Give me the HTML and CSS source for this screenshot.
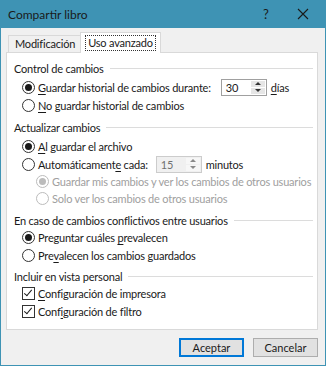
FILE: index.html
```html
<!DOCTYPE html>
<html lang="es">
<head>
  <meta charset="UTF-8" />
  <title>Compartir libro</title>
  <link rel="stylesheet" href="styles.css">
</head>
<body>
  <div class="window">
    <div class="titlebar">
      <span class="title">Compartir libro</span>
      <span class="help">?</span>
      <span class="close">
        <svg width="12" height="12" viewBox="0 0 12 12"><path d="M1 1 L11 11 M11 1 L1 11" stroke="#1a1a1a" stroke-width="1.1" fill="none"/></svg>
      </span>
    </div>

    <div class="dialog">
      <div class="tabs">
        <div class="tab">Modificación</div>
        <div class="tab active"><span class="focus">Uso avanzado</span></div>
      </div>

      <div class="panel">
        <div class="group">
          <div class="group-title">Control de cambios</div>
          <div class="opt">
            <span class="radio on"></span>
            <span><u>G</u>uardar historial de cambios durante:</span>
            <span class="spin spin-days">
              <span class="spin-value">30</span>
              <span class="spin-btns"><span class="up"></span><span class="down"></span></span>
            </span>
            <span><u>d</u>ías</span>
          </div>
          <div class="opt">
            <span class="radio"></span>
            <span><u>N</u>o guardar historial de cambios</span>
          </div>
        </div>

        <div class="group">
          <div class="group-title">Actualizar cambios</div>
          <div class="opt">
            <span class="radio on"></span>
            <span><u>A</u>l guardar el archivo</span>
          </div>
          <div class="opt">
            <span class="radio"></span>
            <span>Automáticament<u>e</u> cada:</span>
            <span class="spin spin-mins disabled">
              <span class="spin-value">15</span>
              <span class="spin-btns"><span class="up"></span><span class="down"></span></span>
            </span>
            <span>minutos</span>
          </div>
          <div class="opt sub disabled">
            <span class="radio on"></span>
            <span>Guardar mis cambios y ver los cambios de otros usuarios</span>
          </div>
          <div class="opt sub disabled">
            <span class="radio"></span>
            <span>Solo ver los cambios de otros usuarios</span>
          </div>
        </div>

        <div class="group group-conflict">
          <div class="group-title">En caso de cambios conflictivos entre usuarios</div>
          <div class="opt">
            <span class="radio on"></span>
            <span>Preguntar cuáles <u>p</u>revalecen</span>
          </div>
          <div class="opt">
            <span class="radio"></span>
            <span>Pre<u>v</u>alecen los cambios guardados</span>
          </div>
        </div>

        <div class="group group-view">
          <div class="group-title">Incluir en vista personal</div>
          <div class="opt">
            <span class="check"></span>
            <span><u>C</u>onfiguración de impresora</span>
          </div>
          <div class="opt">
            <span class="check"></span>
            <span>Conf<u>i</u>guración de filtro</span>
          </div>
        </div>
      </div>

      <div class="buttons">
        <button class="btn default">Aceptar</button>
        <button class="btn">Cancelar</button>
      </div>
    </div>
  </div>
</body>
</html>
```

FILE: styles.css
```css
body {
  margin: 0;
  font-family: Lato, "Noto Sans", sans-serif;
  font-size: 11px;
  letter-spacing: -0.2px;
  color: #000;
  background: #fff;
}

.window {
  width: 326px;
  height: 366px;
  box-sizing: border-box;
  border: 1px solid #3e93b4;
  border-top: none;
  background: #f0f0f0;
  display: flex;
  flex-direction: column;
}

.titlebar {
  height: 28px;
  margin: 0 -1px;
  background: #3e93b4;
  display: flex;
  align-items: center;
  color: #1a1a1a;
  font-size: 12px;
  letter-spacing: 0;
}
.title {
  margin-left: 8px;
  flex: 1;
}
.help {
  width: 20px;
  text-align: center;
  font-size: 13px;
  margin-right: 21px;
}
.close {
  width: 12px;
  height: 12px;
  margin-right: 17px;
  display: flex;
}

.dialog {
  flex: 1;
  display: flex;
  flex-direction: column;
  padding: 5px 7px 0 5px;
}

/* tabs */
.tabs {
  display: flex;
  align-items: flex-end;
  padding-left: 2px;
  height: 19px;
  position: relative;
  z-index: 1;
}
.tab {
  height: 16px;
  padding: 0 6px;
  border: 1px solid #d9d9d9;
  border-bottom: none;
  background: #f0f0f0;
  line-height: 16px;
  color: #1a1a1a;
}
.tab.active {
  height: 20px;
  margin-left: -2px;
  margin-bottom: -1px;
  padding: 0 5px 0 5px;
  background: #fff;
  display: flex;
  align-items: center;
}
.focus {
  outline: 1px dotted #333;
  padding: 0 2px;
  line-height: 14px;
}

.panel {
  height: 278px;
  box-sizing: border-box;
  background: #fff;
  border: 1px solid #d9d9d9;
  padding: 7px 4px 0 7px;
}

.group + .group {
  margin-top: 5px;
}
.group-title {
  display: flex;
  align-items: center;
  height: 16px;
  color: #1a1a1a;
  margin-bottom: 2px;
  white-space: nowrap;
}
.group-title::after {
  content: "";
  flex: 1;
  border-top: 1px solid #dcdcdc;
  margin-left: 6px;
}
.group-conflict .group-title,
.group-view .group-title {
  margin-bottom: 0;
}
.group.group-view {
  margin-top: 4px;
}

.opt {
  display: flex;
  align-items: center;
  height: 18px;
  padding-left: 8px;
  color: #1a1a1a;
  white-space: nowrap;
}
.opt.sub {
  padding-left: 22px;
  height: 17px;
}
.opt.disabled {
  color: #a0a0a0;
}
.opt u {
  text-decoration-thickness: 1px;
  text-underline-offset: 2px;
}

.radio {
  width: 11px;
  height: 11px;
  border: 1px solid #333;
  border-radius: 50%;
  background: #fff;
  margin-right: 3px;
  display: flex;
  align-items: center;
  justify-content: center;
  flex-shrink: 0;
}
.radio.on::after {
  content: "";
  width: 7px;
  height: 7px;
  border-radius: 50%;
  background: #1a1a1a;
}
.disabled .radio {
  border-color: #bcbcbc;
}
.disabled .radio.on::after {
  background: #bcbcbc;
}

.check {
  width: 11px;
  height: 11px;
  border: 1px solid #333;
  background: #fff;
  margin-right: 3px;
  position: relative;
  flex-shrink: 0;
}
.check::after {
  content: "";
  position: absolute;
  left: 3px;
  top: 0;
  width: 3px;
  height: 7px;
  border: solid #1a1a1a;
  border-width: 0 1px 1px 0;
  transform: rotate(40deg);
}

/* spinners */
.spin {
  width: 46px;
  height: 17px;
  box-sizing: border-box;
  border: 1px solid #a0a0a0;
  background: #fff;
  display: flex;
  margin-right: 4px;
  flex-shrink: 0;
}
.spin-days {
  margin-left: 10px;
}
.spin-mins {
  margin-left: 8px;
}
.spin-value {
  flex: 1;
  padding-left: 4px;
  line-height: 15px;
}
.spin-btns {
  width: 14px;
  display: flex;
  flex-direction: column;
  gap: 1px;
  padding: 1px 1px 1px 0;
}
.spin-btns span {
  flex: 1;
  background: #e6e6e6;
  display: flex;
  align-items: center;
  justify-content: center;
}
.spin-btns .up::after {
  content: "";
  border: 3px solid transparent;
  border-bottom: 3px solid #333;
  border-top: none;
}
.spin-btns .down::after {
  content: "";
  border: 3px solid transparent;
  border-top: 3px solid #333;
  border-bottom: none;
}
.spin.disabled {
  border-color: #cccccc;
  background: #f0f0f0;
  color: #707070;
}
.spin.disabled .spin-btns span {
  background: #f7f7f7;
}
.spin.disabled .spin-btns .up::after {
  border-bottom-color: #8a8a8a;
}
.spin.disabled .spin-btns .down::after {
  border-top-color: #8a8a8a;
}

/* buttons */
.buttons {
  display: flex;
  justify-content: flex-end;
  gap: 9px;
  margin-top: 8px;
}
.btn {
  width: 65px;
  height: 19px;
  font: inherit;
  color: #1a1a1a;
  background: #e1e1e1;
  border: 1px solid #adadad;
  padding: 0;
}
.btn.default {
  border: 2px solid #0078d7;
}
```
